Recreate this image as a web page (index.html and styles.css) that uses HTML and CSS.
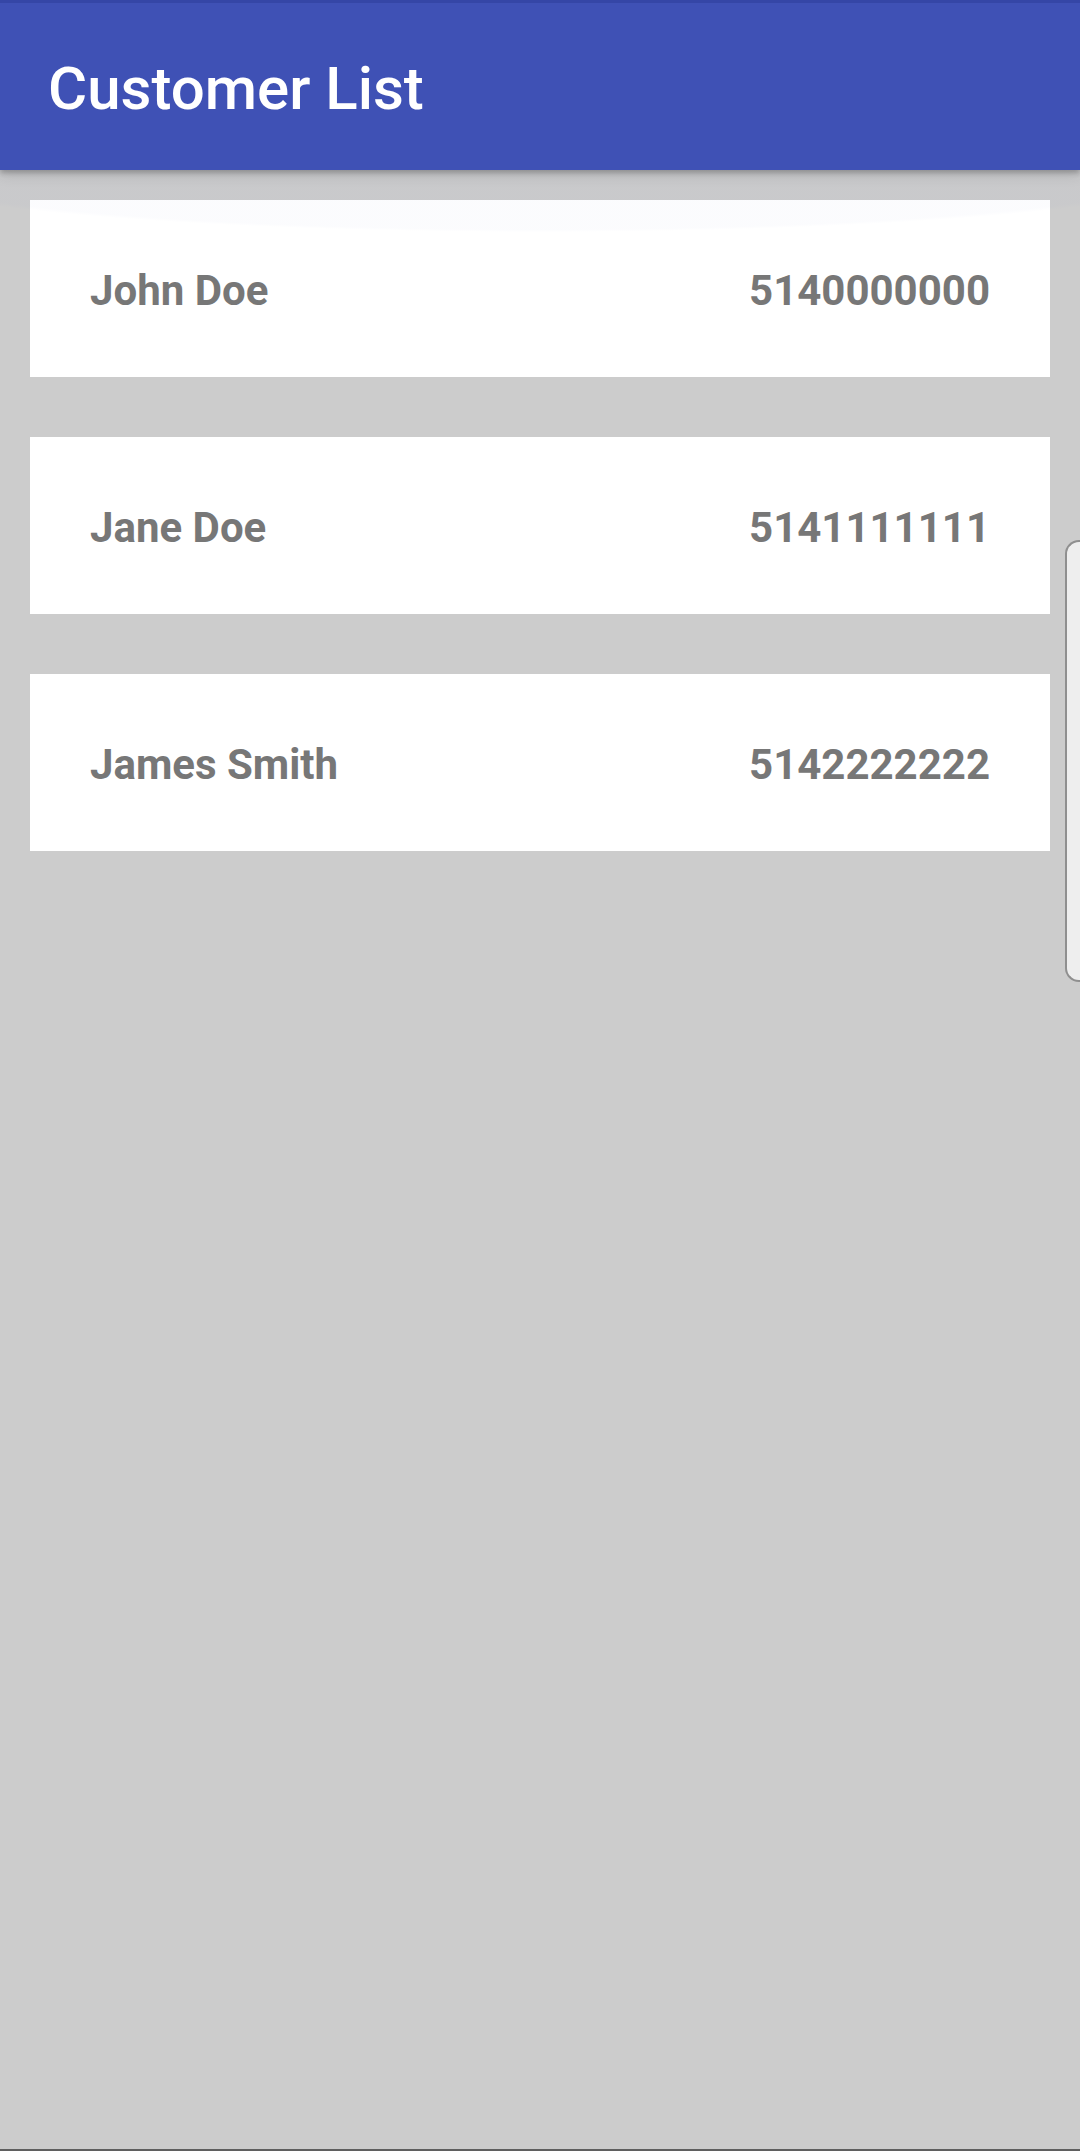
FILE: index.html
```html
<!DOCTYPE html>
<html lang="en">
<head>
<meta charset="utf-8">
<title>Customer List</title>
<link rel="stylesheet" href="styles.css">
</head>
<body>
<div class="screen">
  <header class="toolbar">
    <h1 class="toolbar-title">Customer List</h1>
  </header>
  <main class="list">
    <div class="glow"></div>
    <div class="card">
      <span class="name">John Doe</span>
      <span class="phone">5140000000</span>
    </div>
    <div class="card">
      <span class="name">Jane Doe</span>
      <span class="phone">5141111111</span>
    </div>
    <div class="card">
      <span class="name">James Smith</span>
      <span class="phone">5142222222</span>
    </div>
  </main>
  <div class="edge-handle"></div>
  <div class="bottom-line"></div>
</div>
</body>
</html>
```
FILE: styles.css
```css
* { box-sizing: border-box; }
html, body {
  margin: 0;
  padding: 0;
  width: 1080px;
  height: 2151px;
  overflow: hidden;
  background: #cccccc;
  font-family: Roboto, "Noto Sans", "Liberation Sans", sans-serif;
}
.screen {
  position: relative;
  width: 1080px;
  height: 2151px;
  overflow: hidden;
  display: flex;
  flex-direction: column;
  background: #cccccc;
}
.toolbar {
  position: relative;
  z-index: 2;
  height: 170px;
  flex: 0 0 170px;
  background: #3f51b5;
  border-top: 3px solid #3546a6;
  display: flex;
  align-items: center;
  padding: 4px 48px 0 48px;
  box-shadow: 0 3px 5px rgba(0,0,0,0.22), 0 6px 12px rgba(0,0,0,0.10);
}
.toolbar-title {
  margin: 0;
  color: #ffffff;
  font-size: 60px;
  font-weight: 500;
  line-height: 1;
}
.list {
  position: relative;
  flex: 1;
  display: flex;
  flex-direction: column;
  gap: 60px;
  padding: 30px 30px 0 30px;
}
.glow {
  position: absolute;
  z-index: 1;
  top: 0;
  left: 0;
  right: 0;
  height: 62px;
  background: radial-gradient(ellipse 62% 100% at 50% 0%, rgba(63,81,181,0.018) 0%, rgba(63,81,181,0.018) 96%, rgba(63,81,181,0) 100%);
  pointer-events: none;
}
.card {
  height: 177px;
  background: #ffffff;
  display: flex;
  align-items: center;
  justify-content: space-between;
  padding: 4px 60px 0 60px;
  color: #777777;
  font-size: 42px;
  font-weight: 700;
}
.name, .phone { line-height: 1; }
.edge-handle {
  position: absolute;
  z-index: 3;
  right: 0;
  top: 540px;
  width: 15px;
  height: 442px;
  background: #eeeeee;
  border: 2px solid #8f8f8f;
  border-right: none;
  border-radius: 14px 0 0 14px;
}
.bottom-line {
  position: absolute;
  left: 0;
  right: 0;
  bottom: 0;
  height: 2px;
  background: #5f5f5f;
}
```
